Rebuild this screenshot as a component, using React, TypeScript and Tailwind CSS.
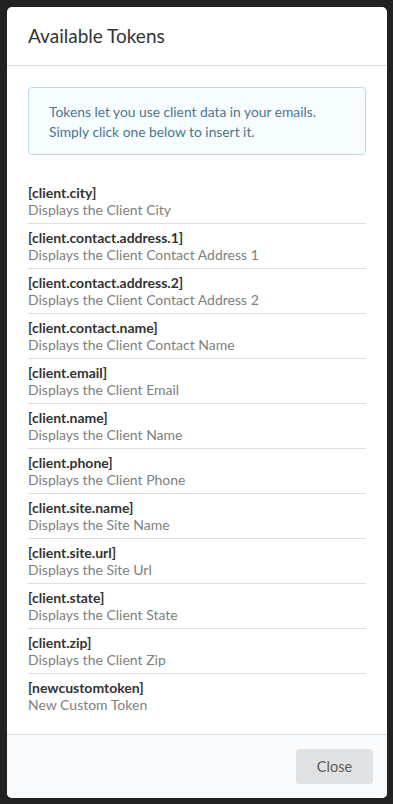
import React from "react";

const tokens: [string, string][] = [
  ["[client.city]", "Displays the Client City"],
  ["[client.contact.address.1]", "Displays the Client Contact Address 1"],
  ["[client.contact.address.2]", "Displays the Client Contact Address 2"],
  ["[client.contact.name]", "Displays the Client Contact Name"],
  ["[client.email]", "Displays the Client Email"],
  ["[client.name]", "Displays the Client Name"],
  ["[client.phone]", "Displays the Client Phone"],
  ["[client.site.name]", "Displays the Site Name"],
  ["[client.site.url]", "Displays the Site Url"],
  ["[client.state]", "Displays the Client State"],
  ["[client.zip]", "Displays the Client Zip"],
  ["[newcustomtoken]", "New Custom Token"],
];

export default function App() {
  return (
    <div
      className="w-[393px] h-[804px] bg-[#222222] overflow-hidden pt-[7px] pl-[7px]"
      style={{ fontFamily: "Lato, 'Open Sans', sans-serif" }}
    >
      <div className="w-[380px] h-[791px] bg-white rounded-[5px] flex flex-col overflow-hidden">
        <div className="h-[59px] shrink-0 px-[21px] pb-[2px] flex items-center border-b border-[#dcdcdc]">
          <h1 className="text-[19px] text-[#333333] leading-none">Available Tokens</h1>
        </div>
        <div className="flex-1 px-[21px] pt-[21px]">
          <div className="h-[68px] border border-[#b9dde8] bg-[#f7fdff] rounded-[4px] px-[20px] pt-[14px] text-[13.8px] leading-[20px] text-[#4b7690]">
            <p>Tokens let you use client data in your emails.</p>
            <p>Simply click one below to insert it.</p>
          </div>
          <div className="mt-[24px] flex flex-col">
            {tokens.map(([t, d], i) => (
              <div
                key={t}
                className={`h-[45px] pt-[5px] text-[14px] leading-[17px] ${
                  i < tokens.length - 1 ? "border-b border-[#dedede]" : ""
                }`}
              >
                <div className="font-bold text-[#333333]">{t}</div>
                <div className="text-[#808080]">{d}</div>
              </div>
            ))}
          </div>
        </div>
        <div className="h-[64px] shrink-0 border-t border-[#dcdcdc] bg-[#f9fafb] flex items-start justify-end pt-[14px] pr-[14px]">
          <button className="w-[77px] h-[35px] rounded-[4px] bg-[#e0e1e2] text-[#5a5a5a] text-[14.5px]">
            Close
          </button>
        </div>
      </div>
    </div>
  );
}
